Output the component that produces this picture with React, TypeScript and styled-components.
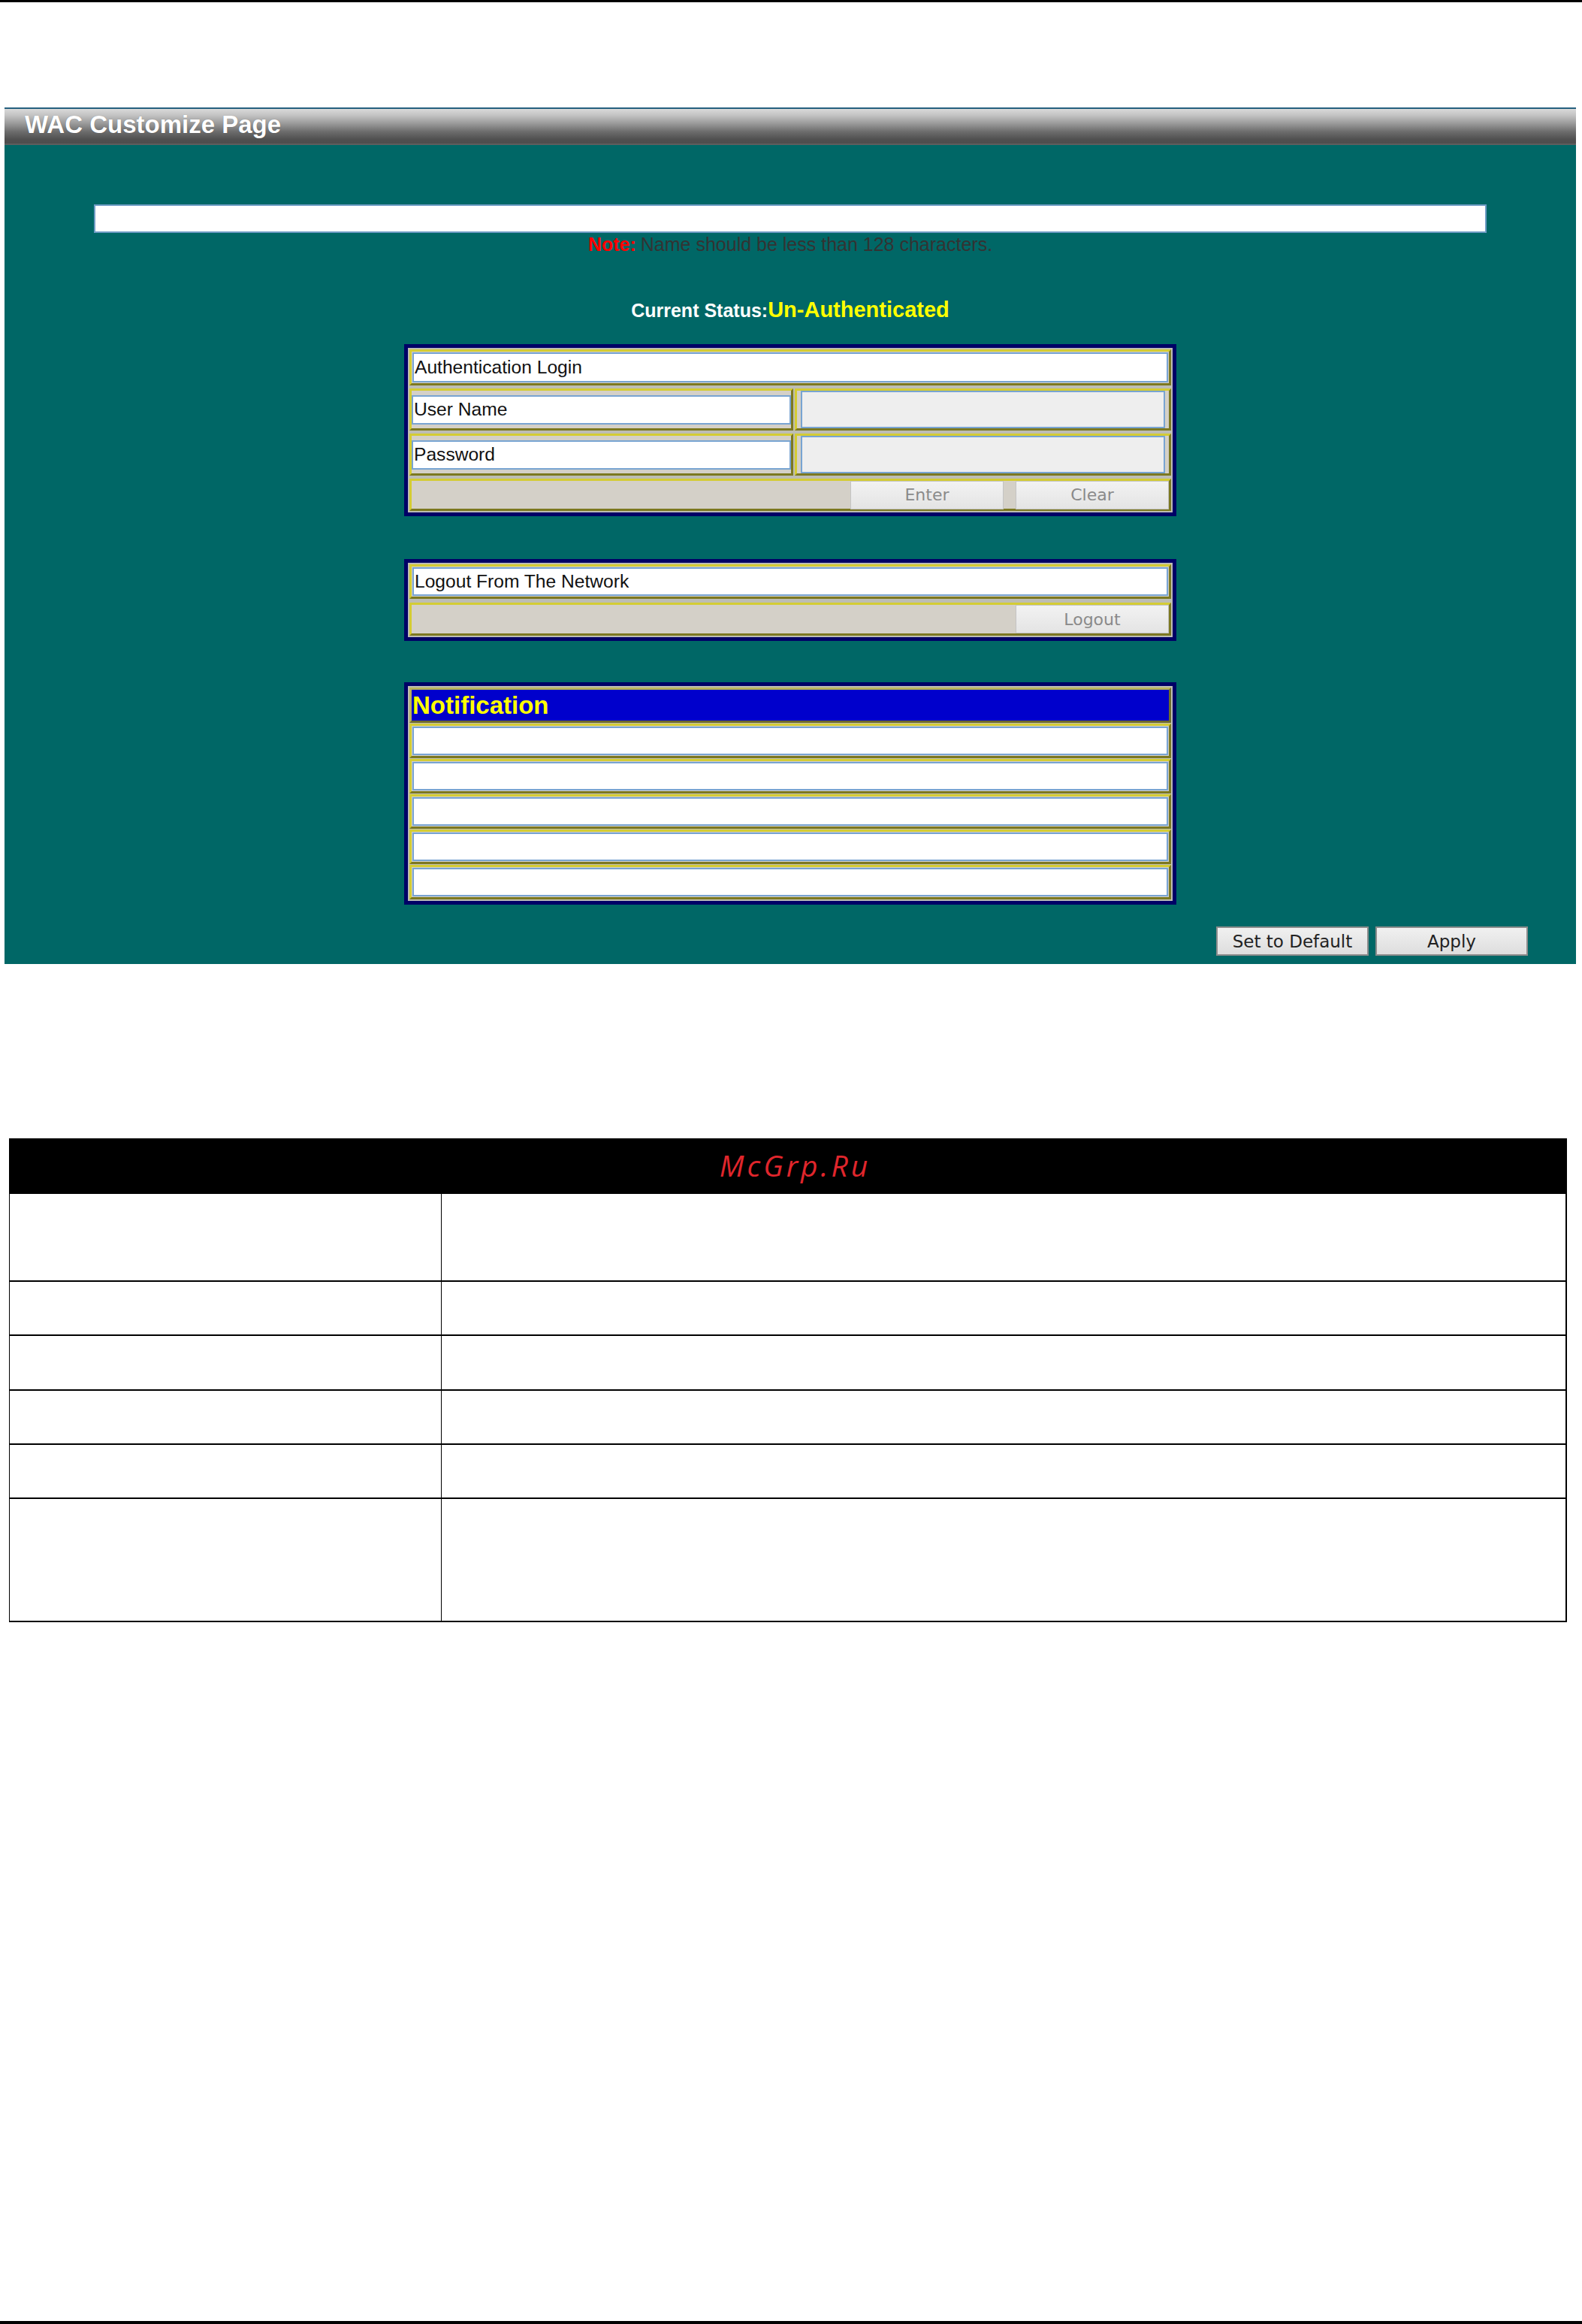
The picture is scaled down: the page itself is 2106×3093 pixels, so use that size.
import React from "react";
import styled, { createGlobalStyle } from "styled-components";

const GlobalStyle = createGlobalStyle`
  html, body { margin: 0; padding: 0; background: #ffffff; }
  body { font-family: "Liberation Sans", Arial, sans-serif; }
  * { box-sizing: border-box; }
`;

const Page = styled.div`
  display: flex;
  flex-direction: column;
  min-height: 3093px;
  width: 2106px;
`;

const Rule = styled.div<{ $h: number }>`
  height: ${(p) => p.$h}px;
  background: #000000;
  flex-shrink: 0;
`;

const FooterRule = styled(Rule)`
  margin-top: auto;
`;

const Panel = styled.section`
  margin: 140px 8px 0 6px;
  display: flex;
  flex-direction: column;
`;

const PanelHeader = styled.div`
  height: 50px;
  border-top: 2px solid #25607f;
  border-bottom: 2px solid #5e5e5e;
  background: linear-gradient(
    to bottom,
    #d9d9d9 0%,
    #c4c4c4 18%,
    #9a9a9a 42%,
    #6c6c6c 66%,
    #505050 88%,
    #4d4d4d 100%
  );
  display: flex;
  align-items: center;
  padding: 0 0 5px 27px;
  color: #ffffff;
  font-family: "Liberation Sans", Arial, sans-serif;
  font-weight: bold;
  font-size: 33px;
  text-shadow: 0 0 1px rgba(0, 0, 0, 0.35);
`;

const PanelBody = styled.div`
  background: #006766;
  display: flex;
  flex-direction: column;
  align-items: center;
  padding: 79px 0 11px 0;
`;

const NameField = styled.div`
  width: 1854px;
  height: 38px;
  background: #ffffff;
  border: 2px solid #6e9cc4;
`;

const NoteLine = styled.div`
  margin-top: 2px;
  font-size: 25px;
  line-height: 27px;
  color: #333333;
`;

const NoteLabel = styled.span`
  color: #ff0000;
  font-weight: bold;
  margin-right: 6px;
`;

const StatusLine = styled.div`
  margin-top: 57px;
  line-height: 32px;
  font-weight: bold;
  font-size: 25px;
  color: #ffffff;
`;

const StatusValue = styled.span`
  color: #ffff00;
  font-size: 29px;
`;

const Frame = styled.div<{ $mt: number }>`
  margin-top: ${(p) => p.$mt}px;
  width: 1028px;
  background: #000066;
  padding: 5px;
`;

const FrameInner = styled.div<{ $gap: number }>`
  background: #bdbdb4;
  padding: 2px;
  display: flex;
  flex-direction: column;
  gap: ${(p) => p.$gap}px;
`;

const Cell = styled.div`
  border: 3px solid;
  border-color: #d4cc34 #7c7820 #7c7820 #d4cc34;
  background: #d4d0c8;
  padding: 1px;
`;

const SplitRow = styled.div`
  display: grid;
  grid-template-columns: 511px 1fr;
  gap: 2px;
  height: 56px;
`;

const LabelCell = styled(Cell)`
  padding: 0;
  display: flex;
  align-items: center;
`;

const ValueCell = styled(Cell)`
  padding: 0 5px;
  display: flex;
  align-items: center;
`;

const Field = styled.div<{ $h: number; $gray?: boolean }>`
  width: 100%;
  height: ${(p) => p.$h}px;
  background: ${(p) => (p.$gray ? "#eeeeee" : "#ffffff")};
  border: 2px solid #78a4d2;
  display: flex;
  align-items: center;
  padding-left: 1px;
  font-family: "Liberation Sans", Arial, sans-serif;
  font-size: 24.6px;
  color: #111111;
  white-space: nowrap;
`;

const ButtonCell = styled(Cell)<{ $h: number }>`
  padding: 0;
  height: ${(p) => p.$h}px;
  display: flex;
  align-items: center;
  justify-content: flex-end;
  gap: 16px;
`;

const GrayButton = styled.div`
  width: 204px;
  height: 38px;
  background: linear-gradient(to bottom, #f2f2f2, #e4e4e4);
  border: 1px solid #c4c4c4;
  display: flex;
  align-items: center;
  justify-content: center;
  font-family: "DejaVu Sans", Verdana, sans-serif;
  font-size: 22px;
  color: #8a8a8a;
`;

const NotifHeader = styled.div`
  height: 47px;
  border: 3px solid;
  border-color: #b9b25a #6f6b2a #6f6b2a #b9b25a;
  background: #0000cc;
  display: flex;
  align-items: center;
  padding-left: 1px;
  color: #ffff00;
  font-weight: bold;
  font-size: 33px;
`;

const ActionRow = styled.div`
  align-self: stretch;
  margin-top: 29px;
  display: flex;
  justify-content: flex-end;
  gap: 9px;
  padding-right: 64px;
`;

const ActionButton = styled.div`
  width: 203px;
  height: 39px;
  background: linear-gradient(to bottom, #f0f0f0, #dedede);
  border: 2px solid #8c8c8c;
  display: flex;
  align-items: center;
  justify-content: center;
  font-family: "DejaVu Sans", Verdana, sans-serif;
  font-size: 23px;
  color: #222222;
`;

const Table = styled.div`
  margin: 232px 20px 0 12px;
  border-left: 1px solid #000;
  border-right: 2px solid #000;
`;

const TableHead = styled.div`
  height: 74px;
  background: #000000;
  display: flex;
  align-items: center;
  justify-content: center;
  padding: 0 0 4px 20px;
  font-family: "Open Sans", "Noto Sans", sans-serif;
  font-style: italic;
  font-size: 39px;
  letter-spacing: 4px;
  color: #e0262c;
`;

const TableRow = styled.div<{ $h: number }>`
  height: ${(p) => p.$h}px;
  display: grid;
  grid-template-columns: 575px 1fr;
  border-bottom: 2px solid #000;
`;

const TableCell = styled.div`
  border-right: 1px solid #000;
  &:last-child { border-right: none; }
`;

const rowHeights = [117, 72, 73, 72, 72, 164];

export default function App() {
  return (
    <Page>
      <GlobalStyle />
      <Rule $h={3} />
      <Panel>
        <PanelHeader>WAC Customize Page</PanelHeader>
        <PanelBody>
          <NameField />
          <NoteLine>
            <NoteLabel>Note:</NoteLabel>Name should be less than 128 characters.
          </NoteLine>
          <StatusLine>
            Current Status:<StatusValue>Un-Authenticated</StatusValue>
          </StatusLine>

          <Frame $mt={29}>
            <FrameInner $gap={4}>
              <Cell>
                <Field $h={40}>Authentication Login</Field>
              </Cell>
              <SplitRow>
                <LabelCell>
                  <Field $h={39}>User Name</Field>
                </LabelCell>
                <ValueCell>
                  <Field $h={50} $gray />
                </ValueCell>
              </SplitRow>
              <SplitRow>
                <LabelCell>
                  <Field $h={39}>Password</Field>
                </LabelCell>
                <ValueCell>
                  <Field $h={50} $gray />
                </ValueCell>
              </SplitRow>
              <ButtonCell $h={43}>
                <GrayButton>Enter</GrayButton>
                <GrayButton>Clear</GrayButton>
              </ButtonCell>
            </FrameInner>
          </Frame>

          <Frame $mt={57}>
            <FrameInner $gap={5}>
              <Cell>
                <Field $h={38}>Logout From The Network</Field>
              </Cell>
              <ButtonCell $h={44}>
                <GrayButton>Logout</GrayButton>
              </ButtonCell>
            </FrameInner>
          </Frame>

          <Frame $mt={55}>
            <FrameInner $gap={1}>
              <NotifHeader>Notification</NotifHeader>
              {[0, 1, 2, 3, 4].map((i) => (
                <Cell key={i}>
                  <Field $h={38} />
                </Cell>
              ))}
            </FrameInner>
          </Frame>

          <ActionRow>
            <ActionButton>Set to Default</ActionButton>
            <ActionButton>Apply</ActionButton>
          </ActionRow>
        </PanelBody>
      </Panel>

      <Table>
        <TableHead>McGrp.Ru</TableHead>
        {rowHeights.map((h, i) => (
          <TableRow key={i} $h={h}>
            <TableCell />
            <TableCell />
          </TableRow>
        ))}
      </Table>

      <FooterRule $h={4} />
    </Page>
  );
}
